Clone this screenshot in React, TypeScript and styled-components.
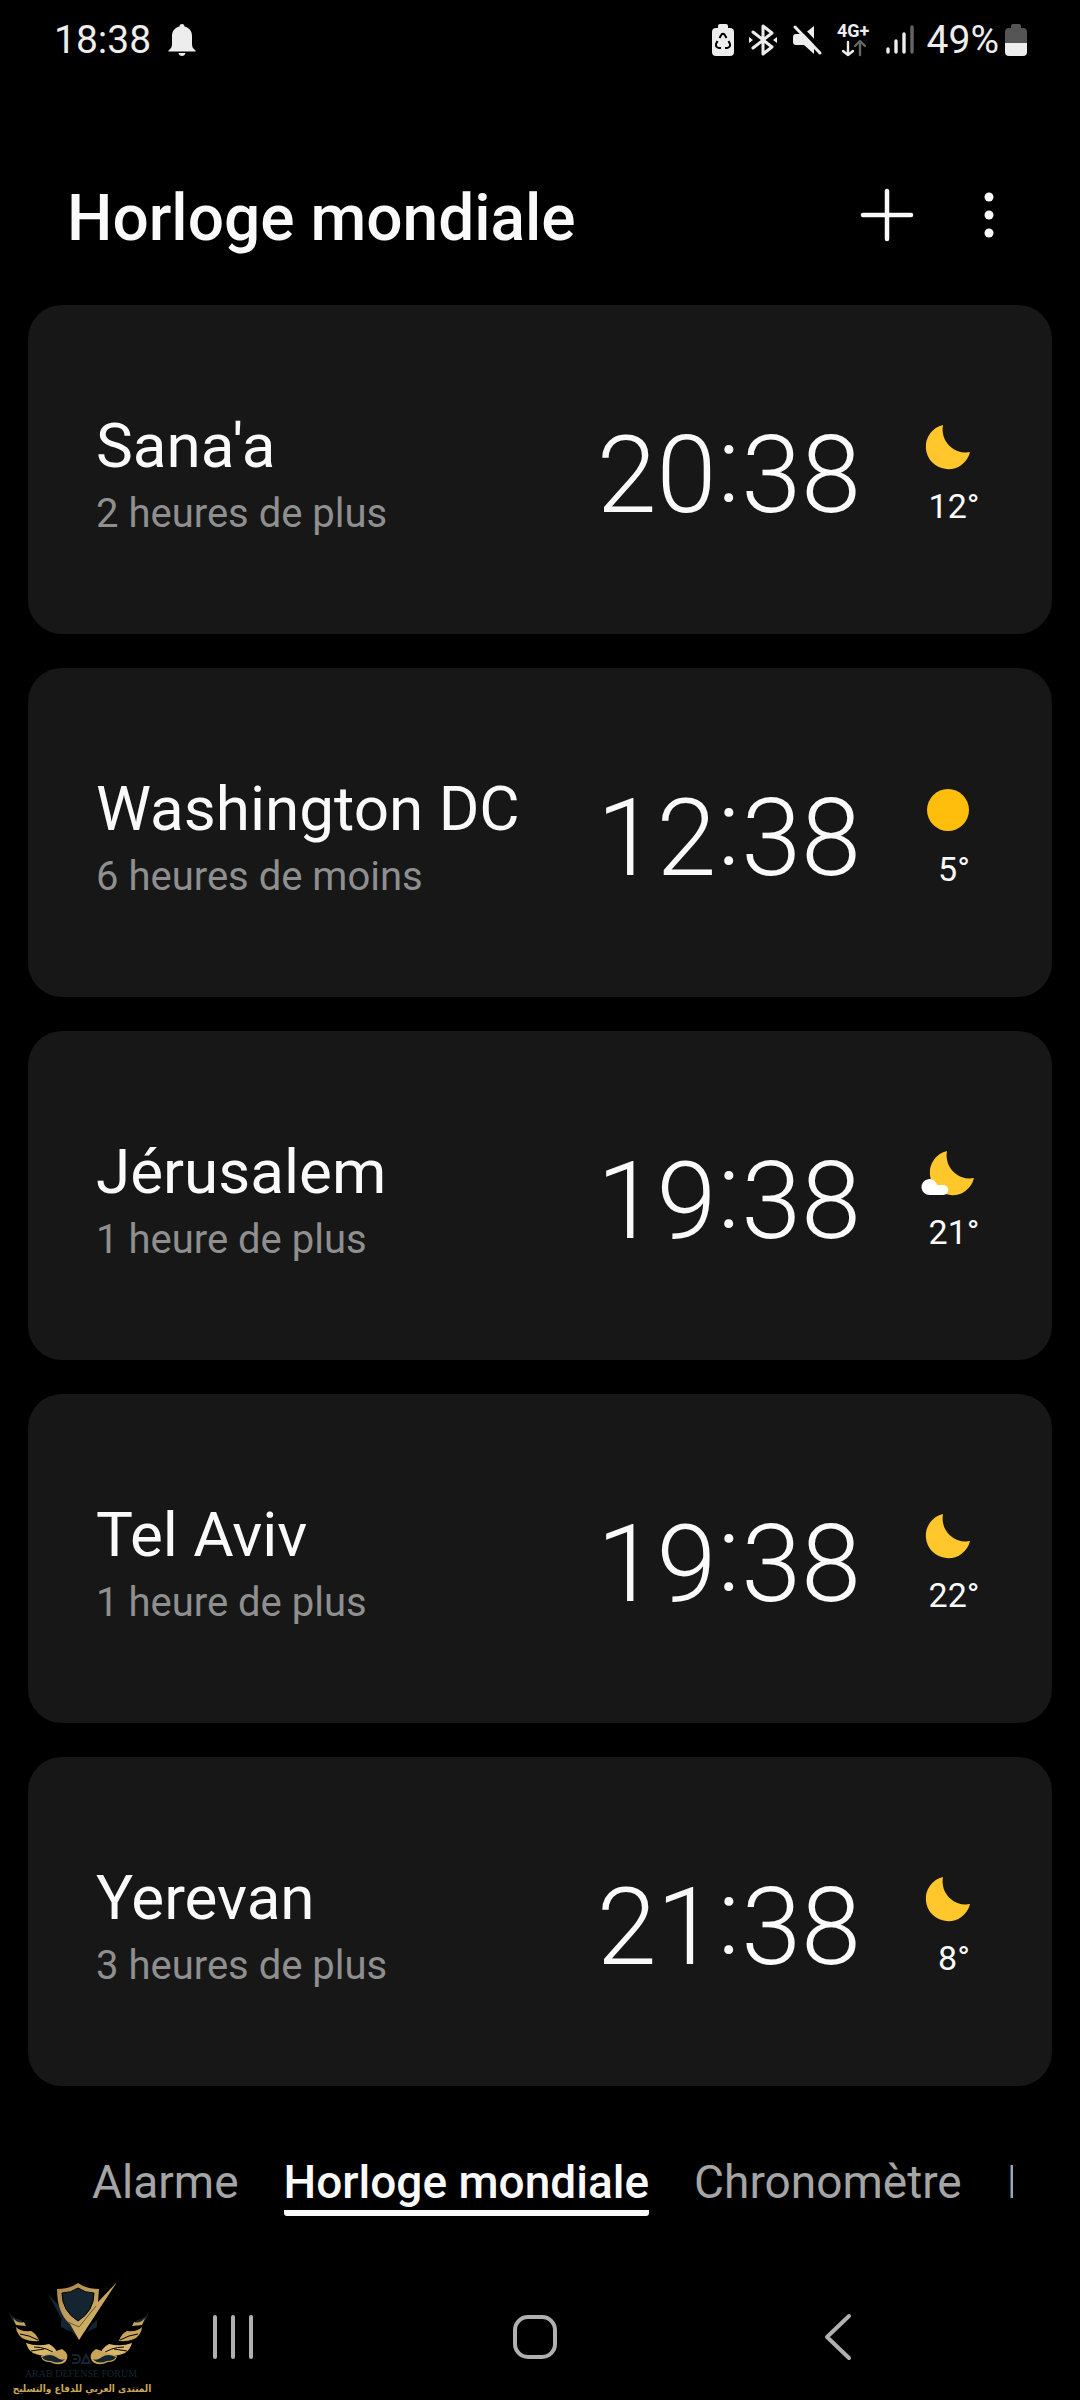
import React from 'react';
import styled, { createGlobalStyle } from 'styled-components';

const GlobalStyle = createGlobalStyle`
  * { box-sizing: border-box; }
  body {
    margin: 0;
    background: #000;
    color: #fafafa;
    font-family: Roboto, 'Liberation Sans', sans-serif;
  }
  h1, h2, p, ul { margin: 0; padding: 0; }
  svg { display: block; flex: none; overflow: visible; }
`;

const Screen = styled.div`
  position: relative;
  display: flex;
  flex-direction: column;
  min-height: 100vh;
  overflow: hidden;
`;

const StatusBar = styled.div`
  display: flex;
  align-items: center;
  justify-content: space-between;
  height: 80px;
  padding: 0 53px 0 54px;
  color: #ededed;
  font-size: 39px;
  line-height: 48px;
`;

const StatusGroup = styled.div<{ $gap: number }>`
  display: flex;
  align-items: center;
  gap: ${(p) => p.$gap}px;
`;

const BatteryGroup = styled(StatusGroup)`
  margin-left: -2px;
`;

const Header = styled.header`
  display: flex;
  align-items: center;
  justify-content: space-between;
  padding: 86px 53px 42px 67px;
  height: 225px;
`;

const Title = styled.h1`
  font-size: 64px;
  line-height: 76px;
  font-weight: 500;
  padding-top: 8px;
`;

const Actions = styled.div`
  display: flex;
  gap: 26px;
`;

const IconButton = styled.button`
  display: grid;
  place-items: center;
  width: 76px;
  height: 76px;
  padding: 0;
  border: 0;
  background: none;
  color: inherit;
`;

const CityList = styled.ul`
  display: flex;
  flex-direction: column;
  gap: 34px;
  padding: 0 28px;
  list-style: none;
`;

const Card = styled.li`
  display: flex;
  align-items: flex-start;
  padding: 106px 30px 96px 68px;
  border-radius: 34px;
  background: #171717;
`;

const Place = styled.div`
  flex: 1;
  min-width: 0;
`;

const City = styled.h2`
  font-size: 62px;
  line-height: 70px;
  font-weight: 400;
`;

const Offset = styled.p`
  margin-top: 9px;
  color: #8f8f8f;
  font-size: 40px;
  line-height: 48px;
`;

const Time = styled.time`
  padding-top: 1px;
  font-size: 108px;
  line-height: 126px;
  font-weight: 300;
`;

const Colon = styled.span`
  padding: 0 1px;
  line-height: 80px;
  vertical-align: 10px;
`;

const Weather = styled.div`
  display: flex;
  flex-direction: column;
  align-items: center;
  gap: 11px;
  width: 136px;
  margin-left: 25px;
  padding-top: 8px;
  font-size: 34px;
  line-height: 40px;
`;

const Tabs = styled.nav`
  display: flex;
  gap: 45px;
  margin: 68px 67px 0 92px;
  overflow: hidden;
`;

const Tab = styled.a<{ $active?: boolean }>`
  flex: none;
  border-bottom: 6px solid ${(p) => (p.$active ? '#fafafa' : 'transparent')};
  border-radius: 3px;
  color: ${(p) => (p.$active ? '#fafafa' : '#a5a5a5')};
  font-size: 46px;
  line-height: 56px;
  font-weight: ${(p) => (p.$active ? 500 : 400)};
  text-decoration: none;
`;

const SystemNav = styled.nav`
  display: flex;
  justify-content: space-around;
  margin-top: auto;
  padding: 0 91px 25px 82px;
`;

const Watermark = styled.svg`
  position: absolute;
  left: 0;
  bottom: 0;
`;

type Sky = 'night' | 'sunny' | 'cloudyNight';

const cities: { name: string; offset: string; time: [string, string]; sky: Sky; temp: string }[] = [
  { name: "Sana'a", offset: '2 heures de plus', time: ['20', '38'], sky: 'night', temp: '12°' },
  { name: 'Washington DC', offset: '6 heures de moins', time: ['12', '38'], sky: 'sunny', temp: '5°' },
  { name: 'Jérusalem', offset: '1 heure de plus', time: ['19', '38'], sky: 'cloudyNight', temp: '21°' },
  { name: 'Tel Aviv', offset: '1 heure de plus', time: ['19', '38'], sky: 'night', temp: '22°' },
  { name: 'Yerevan', offset: '3 heures de plus', time: ['21', '38'], sky: 'night', temp: '8°' },
];

const MOON = 'M23 6A22.4 22.4 0 1 0 50 33A23 23 0 0 1 23 6Z';

function SkyIcon({ sky }: { sky: Sky }) {
  return (
    <svg width="68" height="56" viewBox="0 0 68 56" aria-hidden="true">
      {sky === 'sunny' && <circle cx="28" cy="28" r="21" fill="#ffbd0c" />}
      {sky === 'night' && <path d={MOON} fill="#ffc72c" />}
      {sky === 'cloudyNight' && (
        <>
          <path d={MOON} fill="#ffc72c" transform="translate(4 0)" />
          <path d="M9.7 50A8 8 0 1 1 17.2 40H23.3A5 5 0 0 1 23.3 50Z" fill="#fff" />
        </>
      )}
    </svg>
  );
}

function BellIcon() {
  return (
    <svg width="28" height="34" viewBox="0 0 28 34" fill="#ededed">
      <path d="M11.5 3.5C11.5 .2 16.500 .2 16.500 3.500C21 4.500 24 8 24 13V21C24 24 25 25.500 27.500 27.500V28.500H.5V27.500C3 25.500 4 24 4 21V13C4 8 7 4.500 11.500 3.500Z" />
      <path d="M10.500 30H17.500C17 34 11 34 10.500 30Z" />
    </svg>
  );
}

function BatterySaverIcon() {
  return (
    <svg width="22" height="32" viewBox="0 0 22 32">
      <path d="M6 4V2Q6 0 8 0H14Q16 0 16 2V4H18Q22 4 22 8V28Q22 32 18 32H4Q0 32 0 28V8Q0 4 4 4Z" fill="#ededed" />
      <path
        d="M7.500 14L9.500 10.500Q11 9 12.500 10.500L14.500 14M16.500 17L18 20Q18.500 23.500 15 24H13M9 24H7Q3.500 23.500 4 20L5.500 17"
        fill="none"
        stroke="#000"
        strokeWidth="2"
      />
    </svg>
  );
}

function BluetoothIcon() {
  return (
    <svg width="28" height="32" viewBox="0 0 28 32" fill="none" stroke="#ededed" strokeWidth="3" strokeLinejoin="round" strokeLinecap="round">
      <path d="M4 8L23 23L14 30V2L23 9L4 24" />
      <path d="M0 13L4 16L0 19ZM28 13L24 16L28 19Z" fill="#ededed" stroke="none" />
    </svg>
  );
}

function MuteIcon() {
  return (
    <svg width="30" height="32" viewBox="0 0 30 32">
      <path d="M22 2V30L12 21H4Q1 21 1 18V13Q1 10 4 10H12Z" fill="#ededed" />
      <path d="M5 0L30 26" stroke="#000" strokeWidth="4" />
      <path d="M3 3L28 29" stroke="#ededed" strokeWidth="3" strokeLinecap="round" />
    </svg>
  );
}

function NetworkIcon() {
  return (
    <svg width="34" height="34" viewBox="0 0 34 34" fill="none" strokeWidth="2.400" strokeLinecap="round" strokeLinejoin="round">
      <text x="0" y="14" fontSize="18" fontWeight="700" fill="#ededed">4G+</text>
      <path d="M11 19V32M6 28L11 32L16 28" stroke="#ededed" />
      <path d="M23 32V19M18 23L23 18L28 23" stroke="#666" />
    </svg>
  );
}

function SignalIcon() {
  return (
    <svg width="28" height="32" viewBox="0 0 28 32" strokeWidth="3.400" strokeLinecap="round" stroke="#ededed">
      <path d="M2 25V28M10 17V28M18 10V28" />
      <path d="M26 3V28" stroke="#666" />
    </svg>
  );
}

function BatteryIcon() {
  return (
    <svg width="22" height="32" viewBox="0 0 22 32">
      <path d="M6 4V2Q6 0 8 0H14Q16 0 16 2V4H18Q22 4 22 8V20H0V8Q0 4 4 4Z" fill="#555" />
      <path d="M0 19H22V28Q22 32 18 32H4Q0 32 0 28Z" fill="#ededed" />
    </svg>
  );
}

const WING = (
  <g>
    <path d="M9 41Q12 49 21 50L26 56L16 55Q11 50 9 41Z" fill="#142531" />
    <path d="M13 48Q18 54 24 52L26 56L16 55Z" fill="#c9a55c" />
    <path d="M16 57Q20 62 31 61Q37 64 39 71Q24 72 19 65Q16 61 16 57Z" fill="#c9a55c" />
    <path d="M20 64Q29 65 38 70" stroke="#000" fill="none" />
    <path d="M26 73Q37 77 49 74Q57 78 58 86Q43 87 33 83Q28 80 26 73Z" fill="#d8b66c" />
    <path d="M34 77Q47 77 57 85M31 81L44 79" stroke="#000" fill="none" />
    <path d="M41 86Q53 82 62 79Q70 84 66 91Q60 97 50 92Q42 92 41 86Z" fill="#c9a55c" />
    <path d="M42 87Q50 83 56 87Q61 91 65 89Q60 95 51 91Q44 91 42 87Z" fill="#142531" />
  </g>
);

function ForumLogo() {
  return (
    <Watermark width="160" height="130" viewBox="0 0 160 130" role="img" aria-label="Arab Defense Forum">
      <defs>
        <linearGradient id="gold" x1="0" x2="1" y1="0" y2="1">
          <stop offset="0" stopColor="#a98646" />
          <stop offset="1" stopColor="#e4c47a" />
        </linearGradient>
      </defs>
      <path d="M48 24L79 57L76 66L62 51L61 48Z" fill="#142531" />
      <path d="M61 50V57L71 62L66 54ZM97 50V57L87 62L92 54Z" fill="#142531" />
      <path d="M57 19Q70 19 78 13Q86 19 99 19L98 32L117 12L79 70L70 54Q57 43 57 19Z" fill="url(#gold)" />
      <path d="M62 23Q71 23 78 18Q85 23 94 23Q94 41 78 51Q62 41 62 23Z" fill="#142531" stroke="#000" strokeWidth="1" />
      <path d="M68 52L79 57L96 36" fill="none" stroke="#6d5831" />
      {WING}
      <g transform="matrix(-1 0 0 1 158 0)">{WING}</g>
      <path d="M72 85H76Q80 85 80 89Q80 93 76 93H72M73 89H77M82 93L86 85L90 93Z" fill="none" stroke="#142531" strokeWidth="2" />
      <text x="81" y="107" textAnchor="middle" fontFamily="'Liberation Serif', serif" fontSize="10" fill="#142531">ARAB DEFENSE FORUM</text>
      <text x="82" y="122" textAnchor="middle" direction="rtl" fontFamily="'DejaVu Sans Condensed', 'DejaVu Sans', sans-serif" fontWeight="700" fontSize="10" fill="#c9a55c">المنتدى العربي للدفاع والتسليح</text>
    </Watermark>
  );
}

export default function App() {
  return (
    <Screen>
      <GlobalStyle />
      <StatusBar>
        <StatusGroup $gap={17}>
          <span>18:38</span>
          <BellIcon />
        </StatusGroup>
        <StatusGroup $gap={15}>
          <BatterySaverIcon />
          <BluetoothIcon />
          <MuteIcon />
          <NetworkIcon />
          <SignalIcon />
          <BatteryGroup $gap={6}>
            <span>49%</span>
            <BatteryIcon />
          </BatteryGroup>
        </StatusGroup>
      </StatusBar>

      <Header>
        <Title>Horloge mondiale</Title>
        <Actions>
          <IconButton aria-label="Ajouter une ville">
            <svg width="54" height="54" viewBox="0 0 54 54" stroke="currentColor" strokeWidth="4.500" strokeLinecap="round">
              <path d="M27 3V51M3 27H51" />
            </svg>
          </IconButton>
          <IconButton aria-label="Plus d'options">
            <svg width="10" height="46" viewBox="0 0 10 46" fill="currentColor">
              <circle cx="5" cy="5" r="4.500" />
              <circle cx="5" cy="23" r="4.500" />
              <circle cx="5" cy="41" r="4.500" />
            </svg>
          </IconButton>
        </Actions>
      </Header>

      <main>
        <CityList>
          {cities.map((c) => (
            <Card key={c.name}>
              <Place>
                <City>{c.name}</City>
                <Offset>{c.offset}</Offset>
              </Place>
              <Time>
                {c.time[0]}
                <Colon>:</Colon>
                {c.time[1]}
              </Time>
              <Weather>
                <SkyIcon sky={c.sky} />
                <span>{c.temp}</span>
              </Weather>
            </Card>
          ))}
        </CityList>
      </main>

      <Tabs>
        <Tab href="#alarme">Alarme</Tab>
        <Tab href="#horloge" $active aria-current="page">Horloge mondiale</Tab>
        <Tab href="#chronometre">Chronomètre</Tab>
        <Tab href="#minuteur">Minuteur</Tab>
      </Tabs>

      <SystemNav>
        <IconButton aria-label="Applications récentes">
          <svg width="46" height="46" viewBox="0 0 46 46" stroke="#b0b0b0" strokeWidth="4" strokeLinecap="round">
            <path d="M5 3V43M23 3V43M41 3V43" />
          </svg>
        </IconButton>
        <IconButton aria-label="Accueil">
          <svg width="46" height="46" viewBox="0 0 46 46" fill="none" stroke="#b0b0b0" strokeWidth="4">
            <rect x="3" y="3" width="40" height="40" rx="13" />
          </svg>
        </IconButton>
        <IconButton aria-label="Retour">
          <svg width="46" height="46" viewBox="0 0 46 46" fill="none" stroke="#b0b0b0" strokeWidth="4" strokeLinecap="round" strokeLinejoin="round">
            <path d="M34 2L12 23L34 44" />
          </svg>
        </IconButton>
      </SystemNav>
      <ForumLogo />
    </Screen>
  );
}
